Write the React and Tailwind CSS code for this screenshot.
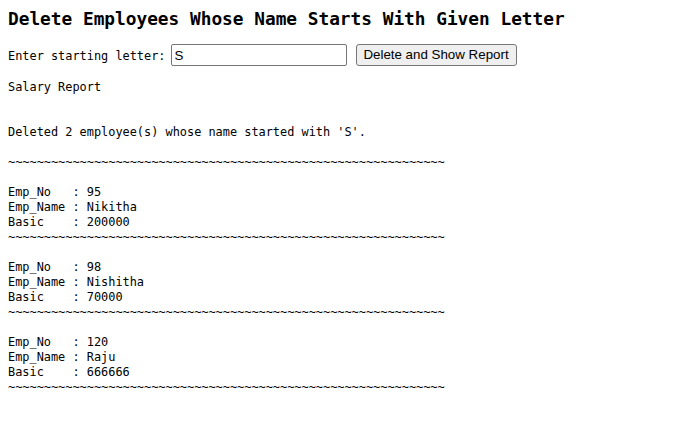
const mono = { fontFamily: '"DejaVu Sans Mono", "Liberation Mono", monospace' };

const tildes = '~'.repeat(61);

const employees = [
  { no: 95, name: 'Nikitha', basic: 200000 },
  { no: 98, name: 'Nishitha', basic: 70000 },
  { no: 120, name: 'Raju', basic: 666666 },
];

export default function App() {
  const report = [
    'Salary Report',
    '',
    '',
    "Deleted 2 employee(s) whose name started with 'S'.",
    '',
    tildes,
    '',
  ];
  employees.forEach((e, i) => {
    report.push(`Emp_No   : ${e.no}`);
    report.push(`Emp_Name : ${e.name}`);
    report.push(`Basic    : ${e.basic}`);
    report.push(tildes);
    if (i < employees.length - 1) report.push('');
  });

  return (
    <div className="min-h-screen bg-white text-black px-[8px]">
      <h2 className="pt-[7px] text-[17.8px] leading-[24px] font-bold font-['DejaVu_Sans_Mono',monospace]">
        Delete Employees Whose Name Starts With Given Letter
      </h2>
      <div className="mt-[13px] flex items-center h-[22px]">
        <span className="text-[11.9px] leading-[15px] font-['DejaVu_Sans_Mono',monospace] mt-[2px]">
          Enter starting letter:
        </span>
        <input
          defaultValue="S"
          className="ml-[5px] w-[176px] h-[22px] border border-[#767676] rounded-[2px] px-[3px] text-[13.33px] font-['Liberation_Sans',Arial,sans-serif] outline-none"
        />
        <button className="ml-[9px] w-[161px] h-[22px] border border-[#767676] rounded-[3px] bg-[#efefef] text-[13.33px] font-['Liberation_Sans',Arial,sans-serif] text-black">
          Delete and Show Report
        </button>
      </div>
      <pre className="mt-[14px] text-[11.9px] leading-[15px]" style={mono}>
        {report.join('\n')}
      </pre>
    </div>
  );
}
